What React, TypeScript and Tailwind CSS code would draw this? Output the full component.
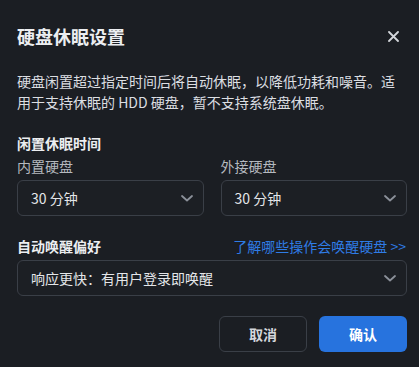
import React, { useState } from 'react';

const Chevron: React.FC = () => (
  <svg width="12" height="7" viewBox="0 0 12 7" fill="none" className="shrink-0">
    <path d="M1 1l5 4.5L11 1" stroke="#8b9099" strokeWidth="1.8" strokeLinecap="round" strokeLinejoin="round" />
  </svg>
);

const Select: React.FC<{ value: string }> = ({ value }) => (
  <div className="h-[36px] mt-[4px] flex items-center justify-between pl-[13px] pr-[10px] rounded-[6px] border border-[#3a3f47] bg-[#1c1f24] text-[14px] text-[#e4e6e9] cursor-pointer">
    <span>{value}</span>
    <Chevron />
  </div>
);

const App: React.FC = () => {
  const [open, setOpen] = useState(true);

  return (
    <div
      className="w-[419px] h-[367px] bg-[#1b1e23] pl-[17px] pr-[12px] overflow-hidden"
      style={{ fontFamily: '"Noto Sans CJK SC", "Noto Sans", sans-serif' }}
    >
      <div className="pt-[24px] flex items-center justify-between">
        <h2 className="text-[18px] leading-[24px] font-bold text-[#eceef1]">硬盘休眠设置</h2>
        <button onClick={() => setOpen(!open)} className="mr-[8px] text-[#d3d6db]">
          <svg width="11" height="11" viewBox="0 0 11 11" fill="none">
            <path d="M1 1l9 9M10 1l-9 9" stroke="currentColor" strokeWidth="1.8" strokeLinecap="round" />
          </svg>
        </button>
      </div>

      <p className="mt-[23px] text-[14px] leading-[21px] text-[#dcdee2]">
        硬盘闲置超过指定时间后将自动休眠，以降低功耗和噪音。适用于支持休眠的 HDD 硬盘，暂不支持系统盘休眠。
      </p>

      <div className="mt-[20px] text-[14px] leading-[20px] font-bold text-[#eceef1]">闲置休眠时间</div>
      <div className="mt-[3px] grid grid-cols-2 gap-[17px]">
        <div>
          <div className="text-[14px] leading-[20px] text-[#b5b9bf]">内置硬盘</div>
          <Select value="30 分钟" />
        </div>
        <div>
          <div className="text-[14px] leading-[20px] text-[#b5b9bf]">外接硬盘</div>
          <Select value="30 分钟" />
        </div>
      </div>

      <div className="mt-[20px] flex items-center justify-between text-[14px] leading-[20px]">
        <span className="font-bold text-[#eceef1]">自动唤醒偏好</span>
        <a className="text-[#2f7ce6] pr-[1px] cursor-pointer">了解哪些操作会唤醒硬盘 &gt;&gt;</a>
      </div>
      <Select value="响应更快：有用户登录即唤醒" />

      <div className="mt-[20px] flex justify-end gap-[12px]">
        <button className="w-[88px] h-[36px] rounded-[6px] border border-[#3a3f47] text-[14px] font-bold text-[#d3d6db]">
          取消
        </button>
        <button className="w-[88px] h-[36px] rounded-[6px] bg-[#2773de] text-[14px] font-bold text-white">
          确认
        </button>
      </div>
    </div>
  );
};

export default App;
